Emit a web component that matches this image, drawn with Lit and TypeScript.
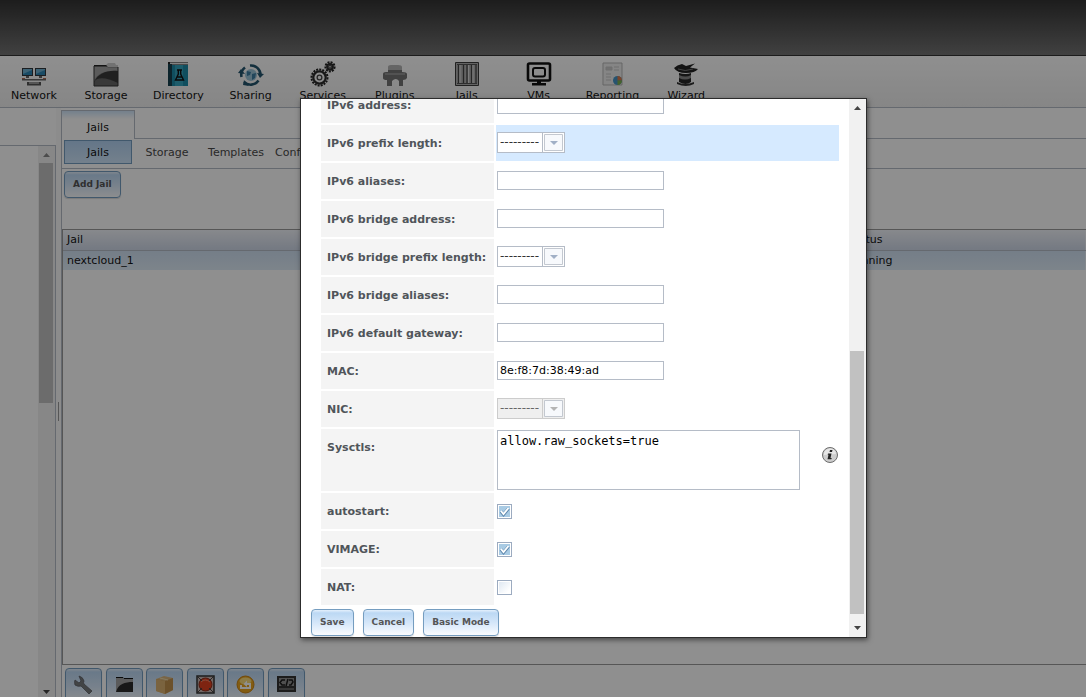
import { LitElement, html, svg, css, nothing } from "lit";
import { customElement, property } from "lit/decorators.js";
import { classMap } from "lit/directives/class-map.js";

const gear = (cx: number, cy: number, r: number) => svg`
  <circle cx=${cx} cy=${cy} r=${r} fill="none" stroke="#222" stroke-width="2" stroke-dasharray="2 1.1"/>
  <circle cx=${cx} cy=${cy} r=${r - 1.8} fill="none" stroke="#2c2c2c" stroke-width="2.2"/>
  <circle cx=${cx} cy=${cy} r=${r / 3.4} fill="none" stroke="#444" stroke-width="1.3"/>`;

const toolIcons: Record<string, unknown> = {
  Network: svg`
    <rect x="1" y="7" width="11" height="8" fill="#30373c"/><rect x="14" y="7" width="11" height="8" fill="#30373c"/>
    <rect x="2" y="8" width="9" height="6" fill="#2d86b4"/><rect x="15" y="8" width="9" height="6" fill="#2d86b4"/>
    <path d="M2 8h9v1L2 13zM15 8h9v1l-9 4z" fill="#6fb0d0"/>
    <path d="M5 15h3v2H5zM18 15h3v2h-3zM1 18h24v1.4H1z" fill="#666"/><path d="M1 17.500h3M22 17.500h3" stroke="#b66b50"/>
    <path d="M6 21h14v3.500H6z" fill="#555"/><path d="M8 22h10" stroke="#ddd"/>`,
  Storage: svg`
    <path d="M1 4h12l2-2h7l1 2h2v21H1z" fill="#ccc"/><path d="M1 4h12l2 2h10v19H1z" fill="#8a8a8a"/>
    <path d="M1 5h12l2 2h10v3C14 9 5 12 1 19z" fill="#a2a2a2"/>
    <path d="M1 25V21C5 12 14 9 25 10v15z" fill="#3a3a3a"/><path d="M1 25V21C5 15 14 17 25 22v3z" fill="#666"/><path d="M1 4h12l1.500 1.500H1z" fill="#222"/>
    <path d="M1 5v20h24V6" fill="none" stroke="#333"/>`,
  Directory: svg`
    <path d="M3 1h20v3H6v21H3z" fill="#222"/><path d="M5 1.500h18v2H5z" fill="#e8e8e8"/>
    <path d="M3 3h4v22H3z" fill="#16404f"/><path d="M7 4h16v21H7z" fill="#1d8ba8"/><path d="M10 4h8v21h-8z" fill="#35a5bf"/>
    <path d="M12 9h5M13.300 9v4L10.500 19h8L15.700 13V9M12 16h5" fill="none" stroke="#111" stroke-width="1.400"/>`,
  Sharing: svg`
    <circle cx="13" cy="14" r="6" fill="#9cc4d8"/><path d="M9 10l4 1-1 3-3 1zM14 13l4-1-1 5-3 2z" fill="#3d7da3"/>
    <path d="M3.500 16A9.500 9.500 0 0 1 7 6.500M12 4.500A9.500 9.500 0 0 1 22.500 14M20.500 19.500A9.500 9.500 0 0 1 6 21" fill="none" stroke="#23556e" stroke-width="2.600"/>
    <path d="M0 12l3-4 4 5zM26 13l-4 4-3-5zM11 25l-6-1 1-5z" fill="#23556e"/>`,
  Services: svg`${gear(9.5, 16.5, 8)}${gear(20, 5.8, 4.6)}`,
  Plugins: svg`
    <path d="M6 6q0-2 3-2h7q4 0 4 2v3H6z" fill="#b4b4b4"/>
    <path d="M1 13q0-2 3-2h2V9h14v2q5 0 5 2v4q-1 2-4 2v6h-4v-5q-3-4-7 0v5H5v-6q-4 0-4-2z" fill="#747474"/>
    <path d="M3 12h20v2H3z" fill="#929292"/>`,
  Jails: svg`
    <path d="M1.500 1.500h23v23h-23z" fill="#b0b0b0" stroke="#3c3c3c"/><path d="M3 3.500h20M3 22.500h20" stroke="#555"/>
    <path d="M4.500 4v18M9.500 4v18M13 4v18M17.500 4v18M22 4v18" stroke="#444" stroke-width="1.300"/>
    <path d="M6 4v18M14.500 4v18M19 4v18" stroke="#ddd"/>`,
  VMs: svg`
    <rect x="2" y="2.500" width="22" height="17" rx="1.500" fill="none" stroke="#111" stroke-width="2.600"/>
    <rect x="7" y="7" width="12" height="8.500" rx="2" fill="none" stroke="#111" stroke-width="2"/>
    <path d="M11 20h4v2h5v2.500H6V22h5z" fill="#111"/>`,
  Reporting: svg`
    <path d="M4 2h19v22H4z" fill="#eee" stroke="#b5b5b5"/><path d="M7 6h6v3H7zM7 13h5M7 16h5M7 19h5M15 6h5M15 9h5" fill="#c9c9c9" stroke="#c6c6c6"/>
    <circle cx="18.500" cy="19.500" r="4.500" fill="#4594c7"/><path d="M18.500 19.500V15a4.500 4.500 0 0 1 4.500 4.500z" fill="#db7c4c"/>
    <path d="M18.500 19.500H23a4.500 4.500 0 0 1-4.500 4.500z" fill="#7eb04c"/>`,
  Wizard: svg`
    <path d="M1 7q3-3 8-4l4 2 9-2.500-5 4 8 1.500q-3 4-12 4T1 7z" fill="#222"/><path d="M5 8q7 3 15 0" stroke="#777" fill="none"/>
    <path d="M6 12q7 2 12 0v9q-5 4-12 0z" fill="#262626"/><path d="M6 14q7 3 12 0v3q-6 3-12 0z" fill="#888"/>
    <path d="M4 21q8 4 17 0v2q-8 4-17 0z" fill="#333"/>`,
};

const dockIcons = [
  svg`<path d="M5 1q4 1 5 5-1 2 0 3l8 7-3 3-8-8q-3 1-6-1-1-3 0-5l4 3 2-2z" fill="#77797c" stroke="#5d6065" stroke-width=".8"/>`,
  svg`<path d="M1 3h7l1 1h9v13H1z" fill="#a2a2a2"/><path d="M1 17C3 9 10 7 18 7v10z" fill="#2b2b2b"/><path d="M1 2.500h7l1 1h9" stroke="#111" fill="none"/>`,
  svg`<path d="M1 4l8-3 9 2v12l-8 4-9-3z" fill="#d8b57d"/><path d="M1 4l9 2 8-3v12l-8 4z" fill="#c0904d"/><path d="M1 4l9 2v13l-9-3z" fill="#d9b070"/><path d="M5 3l8 2" stroke="#eedcae"/>`,
  svg`<path d="M1 1h17v17H1z" fill="#c7b5b0" stroke="#333" stroke-width="1.500"/><circle cx="9.500" cy="9.500" r="6.500" fill="#e0401f" stroke="#8a2a1a"/><path d="M5 7q4-4 9 0" stroke="#f08a6c" fill="none"/><path d="M2 2l4 4M17 2l-4 4M2 17l4-4M17 17l-4-4" stroke="#444"/>`,
  svg`<circle cx="9.500" cy="9.500" r="8.500" fill="#e9a51f" stroke="#c98212"/><ellipse cx="9.500" cy="6" rx="6" ry="3.500" fill="#f9dc7b"/><path d="M5 10v3h9V9h-3" fill="none" stroke="#fff" stroke-width="2"/><path d="M11 5.500L7.500 9l3.500 3z" fill="#fff"/>`,
  svg`<path d="M0 1h19v16H0z" fill="#333"/><path d="M2 3h15v8H2z" fill="#8f8f8f"/><path d="M8 5H5L3 7.500 5 10h3M11 4L9 11M12 5h3l1 2-2 3h-2" fill="none" stroke="#1c1c1c" stroke-width="1.500"/><path d="M2 14h15" stroke="#999"/>`,
];

type Field = { label: string; kind: "text" | "select" | "area" | "check"; value?: string; active?: boolean; disabled?: boolean; checked?: boolean };

const fields: Field[] = [
  { label: "IPv6 address:", kind: "text" },
  { label: "IPv6 prefix length:", kind: "select", active: true },
  { label: "IPv6 aliases:", kind: "text" },
  { label: "IPv6 bridge address:", kind: "text" },
  { label: "IPv6 bridge prefix length:", kind: "select" },
  { label: "IPv6 bridge aliases:", kind: "text" },
  { label: "IPv6 default gateway:", kind: "text" },
  { label: "MAC:", kind: "text", value: "8e:f8:7d:38:49:ad" },
  { label: "NIC:", kind: "select", disabled: true },
  { label: "Sysctls:", kind: "area", value: "allow.raw_sockets=true" },
  { label: "autostart:", kind: "check", checked: true },
  { label: "VIMAGE:", kind: "check", checked: true },
  { label: "NAT:", kind: "check" },
];

const base = css`
  * { box-sizing: border-box; }
  button, input, select, textarea { font: inherit; color: inherit; margin: 0; }
  .claro {
    border: 1px solid #759dc0;
    border-radius: 4px;
    background: linear-gradient(#e4f0fc 0, #bcd8f4 3px, #d4e6f9 50%, #fafcff 100%);
    color: #555;
    font-size: 9px;
    font-weight: bold;
    line-height: 16px;
    height: 27px;
    padding: 0 8px 2px;
    box-shadow: 0 1px 1px rgba(0, 0, 0, 0.15);
  }
`;

@customElement("scroll-rail")
class ScrollRail extends LitElement {
  @property({ type: Number }) start = 0;
  @property({ type: Number }) size = 50;
  static styles = css`
    :host { display: flex; flex-direction: column; width: 17px; background: #f1f1f1; }
    .track { flex: 1; display: flex; flex-direction: column; padding: 0 2px 0 1px; }
    .thumb { background: #c1c1c1; }
    svg { display: block; width: 17px; height: 17px; flex: none; }
  `;
  render() {
    return html`
      <svg viewBox="0 0 17 17"><path d="M5 11h7L8.500 7z" fill=${this.start > 0 ? "#444" : "#888"}/></svg>
      <div class="track">
        <div style="flex:${this.start} 0 0"></div>
        <div class="thumb" style="flex:${this.size} 0 0"></div>
        <div style="flex:${100 - this.start - this.size} 0 0"></div>
      </div>
      <svg viewBox="0 0 17 17"><path d="M5 6h7l-3.500 4z" fill="#444"/></svg>`;
  }
}

@customElement("jail-dialog")
class JailDialog extends LitElement {
  static styles = [base, css`
    :host { display: flex; border: 1px solid #2c2c2c; background: #fff; box-shadow: 1px 2px 5px rgba(0, 0, 0, 0.5); overflow: hidden; }
    form { flex: 1; min-width: 0; display: flex; flex-direction: column; justify-content: flex-end; gap: 2px; padding: 0 10px 1px 20px; }
    .row { display: grid; grid-template-columns: 173px 1fr; gap: 2px; min-height: 36px; flex: none; }
    label { background: #f4f4f4; color: #50555a; font-weight: bold; line-height: 34px; padding: 2px 0 0 6px; white-space: nowrap; }
    .value { display: flex; align-items: center; justify-content: space-between; padding: 0 0 1px 1px; }
    .active .value { background: #d6eaff; }
    .text { width: 167px; height: 19px; border: 1px solid #b5bcc7; padding: 1px 2px; color: #000; background: #fff; }
    .area { width: 303px; height: 60px; margin-top: 1px; border: 1px solid #b5bcc7; padding: 3px 2px; color: #000; font: 12px/14px "DejaVu Sans Mono", monospace; resize: none; display: block; }
    .combo { display: flex; width: 68px; height: 21px; border: 1px solid #b5bcc7; background: #fff; }
    .combo select { flex: 1; min-width: 0; appearance: none; border: 0; border-right: 1px solid #b5bcc7; border-radius: 0; background: transparent; padding: 0 0 1px 2px; color: #333; font-size: 12px; opacity: 1; }
    .combo svg { width: 21px; height: 19px; flex: none; }
    .combo.off { background: #efefef; border-color: #ccc; }
    .combo.off select { color: #666; border-color: #ccc; }
    .check { appearance: none; width: 15px; height: 15px; border: 1px solid #9cabc0; background: linear-gradient(135deg, #dce6f1, #fff 80%); box-shadow: inset 0 0 0 1px #fff; }
    .check:checked { background: #a9cbe4; }
    .tick { display: grid; margin-top: 2px; }
    .tick > * { grid-area: 1 / 1; }
    .tick svg { width: 15px; height: 15px; pointer-events: none; }
    .info { width: 18px; height: 18px; flex: none; margin-bottom: 10px; }
    .actions { display: flex; gap: 9px; margin: 2px 0 0 -10px; }
  `];
  control(f: Field, id: string) {
    if (f.kind === "text") return html`<input class="text" id=${id} type="text" .value=${f.value ?? ""}>`;
    if (f.kind === "area") return html`
      <textarea class="area" id=${id} .value=${f.value ?? ""}></textarea>
      <svg class="info" viewBox="0 0 18 18"><circle cx="9" cy="9" r="7.500" fill="#cdcdcd" stroke="#6c6c6c"/><path d="M3 9a6 6 0 0 1 12-1z" fill="#e6e6e6"/><path d="M9 4h2.500l-.5 2H8.500zM7 7.500h3.500L9.500 12h1.200l-.3 1.200H6.500L7.500 8.700H6.700z" fill="#222"/></svg>`;
    if (f.kind === "check") return html`<span class="tick"><input class="check" id=${id} type="checkbox" ?checked=${!!f.checked}>
      ${f.checked ? html`<svg viewBox="0 0 15 15"><path d="M4 7.500l2.500 3L11.500 4.500" fill="none" stroke="#5d87ad" stroke-width="3.200"/><path d="M4 7l2.500 3L11.500 4" fill="none" stroke="#fff" stroke-width="1.900"/></svg>` : nothing}</span>`;
    return html`<span class=${classMap({ combo: true, off: !!f.disabled })}>
      <select id=${id} ?disabled=${!!f.disabled}><option>---------</option></select>
      <svg viewBox="0 0 21 19"><path d="M1.500 1.500h18v16h-18z" fill="#f7f9fc" stroke="#c3c8d0"/><path d="M7 8h8l-4 4z" fill=${f.disabled ? "#b4b4b4" : "#a1b0c6"}/></svg>
    </span>`;
  }
  render() {
    return html`<form @submit=${(e: Event) => e.preventDefault()}>
        ${fields.map((f, i) => html`<div class=${classMap({ row: true, active: !!f.active })}>
          <label for="field-${i}">${f.label}</label><div class="value">${this.control(f, `field-${i}`)}</div></div>`)}
        <div class="actions">
          <button class="claro">Save</button><button class="claro" type="button">Cancel</button><button class="claro" type="button">Basic Mode</button>
        </div>
      </form>
      <scroll-rail .start=${46.6} .size=${52.2}></scroll-rail>`;
  }
}

@customElement("app-root")
class AppRoot extends LitElement {
  static styles = [base, css`
    :host { display: block; position: relative; height: 100vh; overflow: hidden; font: 11px/14px "DejaVu Sans", Verdana, sans-serif; color: #131313; background: #fff; }
    .page { display: flex; flex-direction: column; height: 100%; }
    .banner { flex: none; height: 56px; background: linear-gradient(#343434, #747474); border-bottom: 1px solid #333; }
    .tools { flex: none; display: flex; gap: 4px; height: 52px; background: linear-gradient(#fff, #efefef); border-bottom: 1px solid #b5bcc7; }
    .tool { flex: none; min-width: 68px; padding: 5px 9px 0; border: 0; background: none; display: flex; flex-direction: column; align-items: center; line-height: 14px; }
    .tool svg { width: 26px; height: 26px; flex: none; margin-bottom: 2px; }
    .body { flex: 1; min-height: 0; display: flex; }
    .side { width: 56px; flex: none; margin: 37px 0 -4px; border: 1px solid #b5bcc7; border-left: 0; border-bottom: 0; display: flex; justify-content: flex-end; }
    .split { width: 5px; flex: none; display: flex; align-items: center; justify-content: center; background: #fafafa; }
    .grip { width: 1px; height: 19px; background: #999; margin-top: 18px; }
    .main { flex: 1; min-width: 0; display: flex; flex-direction: column; padding-top: 2px; }
    .tabs { flex: none; height: 29px; display: flex; }
    .tab { width: 74px; border: 1px solid #b5bcc7; border-bottom: 0; background: linear-gradient(#cfe5fa, #fff 8px); padding: 5px 0 0; }
    .tabline { flex: 1; border-bottom: 1px solid #b5bcc7; }
    .pane { flex: 1; min-height: 0; border-left: 1px solid #b5bcc7; display: flex; flex-direction: column; }
    .subs { flex: none; height: 30px; display: flex; gap: 1px; align-items: center; padding: 0 2px 3px; border-bottom: 1px solid #b5bcc7; }
    .sub { height: 24px; border: 1px solid transparent; background: none; color: #494949; padding: 1px 3px 0; min-width: 68px; }
    .on { border-color: #759dc0; background: linear-gradient(#b3d3f3, #cfe5fa); color: #131313; }
    .space { flex: none; height: 60px; padding: 2px; }
    .grid { flex: 1; min-height: 0; border: 1px solid #999; border-right: 0; }
    table { width: 100%; table-layout: fixed; border-collapse: collapse; }
    th, td { height: 20px; padding: 1px 4px 0; text-align: left; font-weight: normal; line-height: 18px; }
    th { border-bottom: 1px solid #b5bcc7; width: 76%; }
    th + th { width: 24%; }
    th + th, td + td { padding-left: 7px; }
    thead tr { background: linear-gradient(#f1f4fa, #cfd8e8); }
    tbody tr { background: linear-gradient(#cfe0f2, #dfecf8); }
    .dock { flex: none; height: 32px; overflow: hidden; padding: 3px; white-space: nowrap; }
    .dock button { width: 37px; height: 36px; padding: 0 8px 4px; }
    .dock svg { width: 19px; height: 19px; display: block; }
    .veil { position: absolute; inset: 0; background: rgba(0, 0, 0, 0.44); }
    jail-dialog { position: absolute; top: 98px; bottom: 59px; left: 300px; width: 567px; max-width: calc(100% - 300px); }
  `];
  render() {
    return html`
      <div class="page">
        <header class="banner"></header>
        <nav class="tools">${Object.entries(toolIcons).map(([name, icon]) => html`
          <button class="tool"><svg viewBox="0 0 26 26">${icon}</svg>${name}</button>`)}</nav>
        <div class="body">
          <aside class="side"><scroll-rail .start=${0} .size=${46}></scroll-rail></aside>
          <div class="split"><div class="grip"></div></div>
          <main class="main">
            <div class="tabs"><button class="tab">Jails</button><div class="tabline"></div></div>
            <div class="pane">
              <div class="subs"><button class="sub on">Jails</button><button class="sub">Storage</button><button class="sub">Templates</button><button class="sub">Configuration</button></div>
              <div class="space"><button class="claro">Add Jail</button></div>
              <div class="grid">
                <table>
                  <thead><tr><th>Jail</th><th>Status</th></tr></thead>
                  <tbody><tr><td>nextcloud_1</td><td>Running</td></tr></tbody>
                </table>
              </div>
              <div class="dock">${dockIcons.map((icon, i) => html`<button class="claro" aria-label="Action ${i + 1}"><svg viewBox="0 0 19 19">${icon}</svg></button> `)}</div>
            </div>
          </main>
        </div>
      </div>
      <div class="veil"></div>
      <jail-dialog></jail-dialog>`;
  }
}
